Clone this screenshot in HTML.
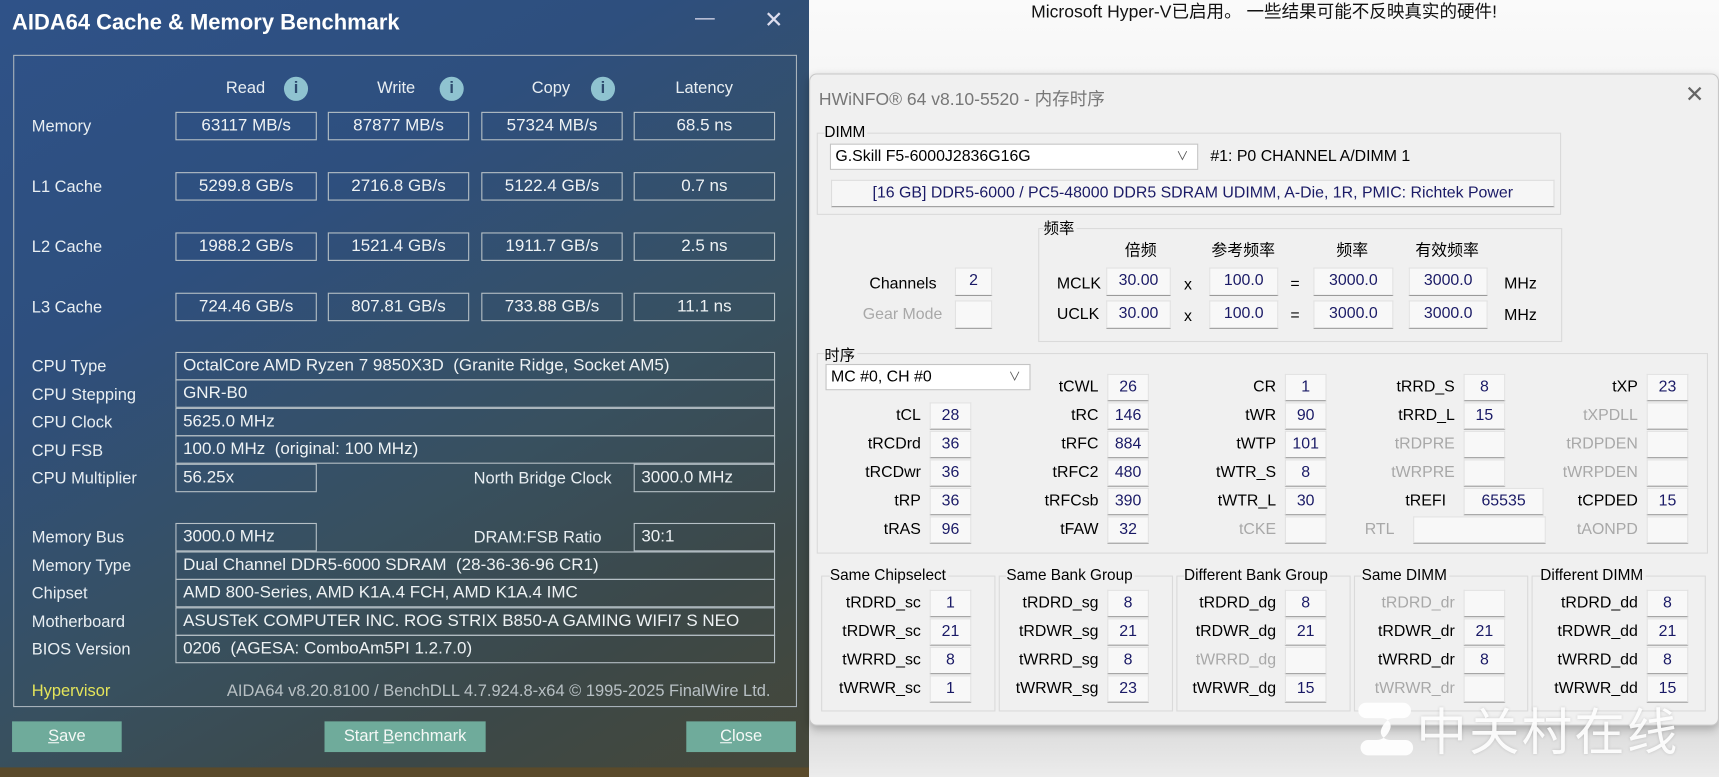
<!DOCTYPE html>
<html><head><meta charset="utf-8">
<style>
*{margin:0;padding:0;box-sizing:border-box}
html,body{width:1719px;height:777px;overflow:hidden;background:#f0f0f0}
.s{position:absolute;left:0;top:0;width:1568px;height:709px;transform:scale(1.0963);transform-origin:0 0;font-family:"Liberation Sans","Noto Sans CJK SC",sans-serif}
.a{position:absolute}
#aida{left:0;top:0;width:738px;height:709px;background:linear-gradient(150deg,#2f5288 0%,#2e4f7e 30%,#38505f 60%,#3c4848 80%,#464738 100%);color:#e8eef2;overflow:hidden}
#aida .t{font-size:20px;font-weight:bold;color:#fff;left:11px;top:10px}
.fr{left:12px;top:50px;width:715px;height:595px;border:1px solid #a9b3bb}
.bx{position:absolute;border:1px solid #b6c0c6;height:26px;font-size:15.5px;line-height:24px;color:#eef2f4}
.c{text-align:center}
.l{padding-left:6px}
.lb{position:absolute;font-size:15px;color:#e8eef2}
.hd{position:absolute;font-size:15px;top:72px}
.ic{position:absolute;top:70px;width:22px;height:22px;border-radius:50%;background:#8fc3d0;color:#2d4a6e;font-weight:bold;font-size:15px;text-align:center;line-height:22px}
.btn{position:absolute;top:658px;height:28px;background:#6fab9b;color:#f4f8f6;font-size:15px;text-align:center;line-height:28px}
#strip{left:0;top:700px;width:738px;height:9px;background:#5a4a2a}
#right{left:738px;top:0;width:830px;height:709px;background:linear-gradient(#fafafa 0,#f7f7f7 60px,#ececec 640px,#dedede 670px,#ececec 709px)}
#hw{left:738px;top:67px;width:830px;height:595px;background:#f0f0f0;border:1px solid #c8c8c8;border-radius:7px;box-shadow:0 3px 8px rgba(0,0,0,.25)}
.g{position:absolute;border:1px solid #dadada}
.gt{position:absolute;font-size:14px;color:#000;background:#f0f0f0;padding-right:2px}
.h{position:absolute;font-size:14.5px;color:#000}
.v{position:absolute;height:25px;width:38px;background:#f8f8f8;border:1px solid #e2e2e2;border-bottom:1px solid #9a9a9a;font-size:14.5px;color:#1a1a66;text-align:center;line-height:22px}
.tl{position:absolute;width:100px;text-align:right;font-size:14.5px;color:#000;line-height:25px}
.d{color:#a8a8a8}
.combo{position:absolute;background:#fff;border:1px solid #c4c4c4;font-size:14.5px;line-height:22px;padding-left:4px}
.combo span{position:absolute;right:8px;top:0;font-size:11px;color:#555}
</style></head><body><div class="s">

<div id="aida" class="a">
<div class="a t">AIDA64 Cache &amp; Memory Benchmark</div>
<div class="a" style="left:634px;top:6px;font-size:18px;color:#dde">—</div>
<div class="a" style="left:697px;top:6px;font-size:21px;color:#dde">✕</div>
<div class="a fr"></div>

<div class="hd" style="left:206px">Read</div><div class="ic" style="left:259px">i</div>
<div class="hd" style="left:344px">Write</div><div class="ic" style="left:401px">i</div>
<div class="hd" style="left:485px">Copy</div><div class="ic" style="left:539px">i</div>
<div class="hd" style="left:616px">Latency</div>

<div class="lb" style="left:29px;top:107px">Memory</div>
<div class="bx c" style="left:160px;top:102px;width:129px">63117 MB/s</div>
<div class="bx c" style="left:299px;top:102px;width:129px">87877 MB/s</div>
<div class="bx c" style="left:439px;top:102px;width:129px">57324 MB/s</div>
<div class="bx c" style="left:578px;top:102px;width:129px">68.5 ns</div>

<div class="lb" style="left:29px;top:162px">L1 Cache</div>
<div class="bx c" style="left:160px;top:157px;width:129px">5299.8 GB/s</div>
<div class="bx c" style="left:299px;top:157px;width:129px">2716.8 GB/s</div>
<div class="bx c" style="left:439px;top:157px;width:129px">5122.4 GB/s</div>
<div class="bx c" style="left:578px;top:157px;width:129px">0.7 ns</div>

<div class="lb" style="left:29px;top:217px">L2 Cache</div>
<div class="bx c" style="left:160px;top:212px;width:129px">1988.2 GB/s</div>
<div class="bx c" style="left:299px;top:212px;width:129px">1521.4 GB/s</div>
<div class="bx c" style="left:439px;top:212px;width:129px">1911.7 GB/s</div>
<div class="bx c" style="left:578px;top:212px;width:129px">2.5 ns</div>

<div class="lb" style="left:29px;top:272px">L3 Cache</div>
<div class="bx c" style="left:160px;top:267px;width:129px">724.46 GB/s</div>
<div class="bx c" style="left:299px;top:267px;width:129px">807.81 GB/s</div>
<div class="bx c" style="left:439px;top:267px;width:129px">733.88 GB/s</div>
<div class="bx c" style="left:578px;top:267px;width:129px">11.1 ns</div>

<div class="lb" style="left:29px;top:326px">CPU Type</div>
<div class="bx l" style="left:160px;top:321px;width:547px">OctalCore AMD Ryzen 7 9850X3D&nbsp; (Granite Ridge, Socket AM5)</div>
<div class="lb" style="left:29px;top:352px">CPU Stepping</div>
<div class="bx l" style="left:160px;top:346px;width:547px">GNR-B0</div>
<div class="lb" style="left:29px;top:377px">CPU Clock</div>
<div class="bx l" style="left:160px;top:372px;width:547px">5625.0 MHz</div>
<div class="lb" style="left:29px;top:403px">CPU FSB</div>
<div class="bx l" style="left:160px;top:397px;width:547px">100.0 MHz&nbsp; (original: 100 MHz)</div>
<div class="lb" style="left:29px;top:428px">CPU Multiplier</div>
<div class="bx l" style="left:160px;top:423px;width:129px">56.25x</div>
<div class="lb" style="left:432px;top:428px">North Bridge Clock</div>
<div class="bx l" style="left:578px;top:423px;width:129px">3000.0 MHz</div>

<div class="lb" style="left:29px;top:482px">Memory Bus</div>
<div class="bx l" style="left:160px;top:477px;width:129px">3000.0 MHz</div>
<div class="lb" style="left:432px;top:482px">DRAM:FSB Ratio</div>
<div class="bx l" style="left:578px;top:477px;width:129px">30:1</div>
<div class="lb" style="left:29px;top:508px">Memory Type</div>
<div class="bx l" style="left:160px;top:503px;width:547px">Dual Channel DDR5-6000 SDRAM&nbsp; (28-36-36-96 CR1)</div>
<div class="lb" style="left:29px;top:533px">Chipset</div>
<div class="bx l" style="left:160px;top:528px;width:547px">AMD 800-Series, AMD K1A.4 FCH, AMD K1A.4 IMC</div>
<div class="lb" style="left:29px;top:559px">Motherboard</div>
<div class="bx l" style="left:160px;top:554px;width:547px">ASUSTeK COMPUTER INC. ROG STRIX B850-A GAMING WIFI7 S NEO</div>
<div class="lb" style="left:29px;top:584px">BIOS Version</div>
<div class="bx l" style="left:160px;top:579px;width:547px">0206&nbsp; (AGESA: ComboAm5PI 1.2.7.0)</div>

<div class="lb" style="left:29px;top:622px;color:#e4e45a">Hypervisor</div>
<div class="lb" style="left:207px;top:622px;color:#b8c0c4">AIDA64 v8.20.8100 / BenchDLL 4.7.924.8-x64 © 1995-2025 FinalWire Ltd.</div>

<div class="btn" style="left:11px;width:100px"><u>S</u>ave</div>
<div class="btn" style="left:296px;width:147px">Start <u>B</u>enchmark</div>
<div class="btn" style="left:626px;width:100px"><u>C</u>lose</div>
<div id="strip" class="a"></div>
</div>

<div id="right" class="a"></div>
<div class="a" style="left:738px;top:-3px;width:860px;text-align:center;font-size:16px;color:#111;padding-right:30px">Microsoft Hyper-V已启用。 一些结果可能不反映真实的硬件!</div>

<div id="hw" class="a"></div>
<div class="a" style="left:747px;top:77px;font-size:16px;color:#777">HWiNFO® 64 v8.10-5520 - 内存时序</div>
<div class="a" style="left:1537px;top:74px;font-size:21px;color:#666">✕</div>

<div class="g" style="left:745px;top:121px;width:679px;height:75px"></div>
<div class="gt" style="left:752px;top:112px">DIMM</div>
<div class="combo" style="left:757px;top:131px;width:336px;height:24px">G.Skill F5-6000J2836G16G<span>∨</span></div>
<div class="h" style="left:1104px;top:135px">#1: P0 CHANNEL A/DIMM 1</div>
<div class="a" style="left:758px;top:164px;width:660px;height:25px;background:#f6f6f6;border:1px solid #ddd;border-bottom:1px solid #999;text-align:center;font-size:14.5px;line-height:22px;color:#1a1a66">[16 GB] DDR5-6000 / PC5-48000 DDR5 SDRAM UDIMM, A-Die, 1R, PMIC: Richtek Power</div>

<div class="g" style="left:947px;top:208px;width:478px;height:104px"></div>
<div class="gt" style="left:952px;top:198px">频率</div>
<div class="h" style="left:1026px;top:217px">倍频</div>
<div class="h" style="left:1105px;top:217px">参考频率</div>
<div class="h" style="left:1219px;top:217px">频率</div>
<div class="h" style="left:1291px;top:217px">有效频率</div>
<div class="h" style="left:964px;top:251px">MCLK</div>
<div class="h" style="left:964px;top:279px">UCLK</div>
<div class="v" style="left:1009px;top:244px;width:59px;height:26px">30.00</div>
<div class="v" style="left:1103px;top:244px;width:63px;height:26px">100.0</div>
<div class="v" style="left:1198px;top:244px;width:73px;height:26px">3000.0</div>
<div class="v" style="left:1285px;top:244px;width:72px;height:26px">3000.0</div>
<div class="v" style="left:1009px;top:274px;width:59px;height:26px">30.00</div>
<div class="v" style="left:1103px;top:274px;width:63px;height:26px">100.0</div>
<div class="v" style="left:1198px;top:274px;width:73px;height:26px">3000.0</div>
<div class="v" style="left:1285px;top:274px;width:72px;height:26px">3000.0</div>
<div class="h" style="left:1080px;top:252px">x</div><div class="h" style="left:1080px;top:281px">x</div>
<div class="h" style="left:1177px;top:251px">=</div><div class="h" style="left:1177px;top:280px">=</div>
<div class="h" style="left:1372px;top:251px">MHz</div><div class="h" style="left:1372px;top:280px">MHz</div>
<div class="h" style="left:793px;top:251px">Channels</div>
<div class="v" style="left:871px;top:244px;width:34px;height:26px">2</div>
<div class="h d" style="left:787px;top:279px">Gear Mode</div>
<div class="v" style="left:871px;top:274px;width:34px;height:26px"></div>

<div class="g" style="left:745px;top:322px;width:813px;height:183px"></div>
<div class="gt" style="left:752px;top:314px">时序</div>
<div class="combo" style="left:753px;top:332px;width:187px;height:24px">MC #0, CH #0<span>∨</span></div>

<div class="tl" style="left:740px;top:367px">tCL</div><div class="v" style="left:848px;top:367px">28</div>
<div class="tl" style="left:740px;top:393px">tRCDrd</div><div class="v" style="left:848px;top:393px">36</div>
<div class="tl" style="left:740px;top:419px">tRCDwr</div><div class="v" style="left:848px;top:419px">36</div>
<div class="tl" style="left:740px;top:445px">tRP</div><div class="v" style="left:848px;top:445px">36</div>
<div class="tl" style="left:740px;top:471px">tRAS</div><div class="v" style="left:848px;top:471px">96</div>

<div class="tl" style="left:902px;top:341px">tCWL</div><div class="v" style="left:1010px;top:341px">26</div>
<div class="tl" style="left:902px;top:367px">tRC</div><div class="v" style="left:1010px;top:367px">146</div>
<div class="tl" style="left:902px;top:393px">tRFC</div><div class="v" style="left:1010px;top:393px">884</div>
<div class="tl" style="left:902px;top:419px">tRFC2</div><div class="v" style="left:1010px;top:419px">480</div>
<div class="tl" style="left:902px;top:445px">tRFCsb</div><div class="v" style="left:1010px;top:445px">390</div>
<div class="tl" style="left:902px;top:471px">tFAW</div><div class="v" style="left:1010px;top:471px">32</div>

<div class="tl" style="left:1064px;top:341px">CR</div><div class="v" style="left:1172px;top:341px">1</div>
<div class="tl" style="left:1064px;top:367px">tWR</div><div class="v" style="left:1172px;top:367px">90</div>
<div class="tl" style="left:1064px;top:393px">tWTP</div><div class="v" style="left:1172px;top:393px">101</div>
<div class="tl" style="left:1064px;top:419px">tWTR_S</div><div class="v" style="left:1172px;top:419px">8</div>
<div class="tl" style="left:1064px;top:445px">tWTR_L</div><div class="v" style="left:1172px;top:445px">30</div>
<div class="tl d" style="left:1064px;top:471px">tCKE</div><div class="v" style="left:1172px;top:471px"></div>

<div class="tl" style="left:1227px;top:341px">tRRD_S</div><div class="v" style="left:1335px;top:341px">8</div>
<div class="tl" style="left:1227px;top:367px">tRRD_L</div><div class="v" style="left:1335px;top:367px">15</div>
<div class="tl d" style="left:1227px;top:393px">tRDPRE</div><div class="v" style="left:1335px;top:393px"></div>
<div class="tl d" style="left:1227px;top:419px">tWRPRE</div><div class="v" style="left:1335px;top:419px"></div>
<div class="tl" style="left:1219px;top:445px">tREFI</div><div class="v" style="left:1335px;top:445px;width:73px">65535</div>
<div class="tl d" style="left:1172px;top:471px">RTL</div><div class="v" style="left:1289px;top:471px;width:121px"></div>

<div class="tl" style="left:1394px;top:341px">tXP</div><div class="v" style="left:1502px;top:341px">23</div>
<div class="tl d" style="left:1394px;top:367px">tXPDLL</div><div class="v" style="left:1502px;top:367px"></div>
<div class="tl d" style="left:1394px;top:393px">tRDPDEN</div><div class="v" style="left:1502px;top:393px"></div>
<div class="tl d" style="left:1394px;top:419px">tWRPDEN</div><div class="v" style="left:1502px;top:419px"></div>
<div class="tl" style="left:1394px;top:445px">tCPDED</div><div class="v" style="left:1502px;top:445px">15</div>
<div class="tl d" style="left:1394px;top:471px">tAONPD</div><div class="v" style="left:1502px;top:471px"></div>

<div class="g" style="left:749px;top:525px;width:159px;height:124px"></div>
<div class="gt" style="left:757px;top:516px">Same Chipselect</div>
<div class="tl" style="left:740px;top:538px">tRDRD_sc</div><div class="v" style="left:848px;top:538px">1</div>
<div class="tl" style="left:740px;top:564px">tRDWR_sc</div><div class="v" style="left:848px;top:564px">21</div>
<div class="tl" style="left:740px;top:590px">tWRRD_sc</div><div class="v" style="left:848px;top:590px">8</div>
<div class="tl" style="left:740px;top:616px">tWRWR_sc</div><div class="v" style="left:848px;top:616px">1</div>

<div class="g" style="left:911px;top:525px;width:159px;height:124px"></div>
<div class="gt" style="left:918px;top:516px">Same Bank Group</div>
<div class="tl" style="left:902px;top:538px">tRDRD_sg</div><div class="v" style="left:1010px;top:538px">8</div>
<div class="tl" style="left:902px;top:564px">tRDWR_sg</div><div class="v" style="left:1010px;top:564px">21</div>
<div class="tl" style="left:902px;top:590px">tWRRD_sg</div><div class="v" style="left:1010px;top:590px">8</div>
<div class="tl" style="left:902px;top:616px">tWRWR_sg</div><div class="v" style="left:1010px;top:616px">23</div>

<div class="g" style="left:1073px;top:525px;width:159px;height:124px"></div>
<div class="gt" style="left:1080px;top:516px">Different Bank Group</div>
<div class="tl" style="left:1064px;top:538px">tRDRD_dg</div><div class="v" style="left:1172px;top:538px">8</div>
<div class="tl" style="left:1064px;top:564px">tRDWR_dg</div><div class="v" style="left:1172px;top:564px">21</div>
<div class="tl d" style="left:1064px;top:590px">tWRRD_dg</div><div class="v" style="left:1172px;top:590px"></div>
<div class="tl" style="left:1064px;top:616px">tWRWR_dg</div><div class="v" style="left:1172px;top:616px">15</div>

<div class="g" style="left:1235px;top:525px;width:159px;height:124px"></div>
<div class="gt" style="left:1242px;top:516px">Same DIMM</div>
<div class="tl d" style="left:1227px;top:538px">tRDRD_dr</div><div class="v" style="left:1335px;top:538px"></div>
<div class="tl" style="left:1227px;top:564px">tRDWR_dr</div><div class="v" style="left:1335px;top:564px">21</div>
<div class="tl" style="left:1227px;top:590px">tWRRD_dr</div><div class="v" style="left:1335px;top:590px">8</div>
<div class="tl d" style="left:1227px;top:616px">tWRWR_dr</div><div class="v" style="left:1335px;top:616px"></div>

<div class="g" style="left:1397px;top:525px;width:159px;height:124px"></div>
<div class="gt" style="left:1405px;top:516px">Different DIMM</div>
<div class="tl" style="left:1394px;top:538px">tRDRD_dd</div><div class="v" style="left:1502px;top:538px">8</div>
<div class="tl" style="left:1394px;top:564px">tRDWR_dd</div><div class="v" style="left:1502px;top:564px">21</div>
<div class="tl" style="left:1394px;top:590px">tWRRD_dd</div><div class="v" style="left:1502px;top:590px">8</div>
<div class="tl" style="left:1394px;top:616px">tWRWR_dd</div><div class="v" style="left:1502px;top:616px">15</div>

<svg class="a" style="left:1238px;top:638px" width="52" height="54" viewBox="0 0 52 54">
<path d="M8 3 H42 A7 7 0 0 1 42 17 H34 C28 17 24 22 22 27 C20 32 24 37 30 37 H44 A7 7 0 0 1 44 51 H10 A7 7 0 0 1 10 37 H18 C24 37 28 32 30 27 C32 22 28 17 22 17 H8 A7 7 0 0 1 8 3 Z" fill="rgba(255,255,255,.93)"/>
</svg>
<div class="a" style="left:1292px;top:632px;font-size:46px;color:rgba(255,255,255,.92);font-family:'Noto Sans CJK SC',sans-serif;letter-spacing:2px;text-shadow:0 0 3px rgba(0,0,0,.15)">中关村在线</div>
</div></body></html>
